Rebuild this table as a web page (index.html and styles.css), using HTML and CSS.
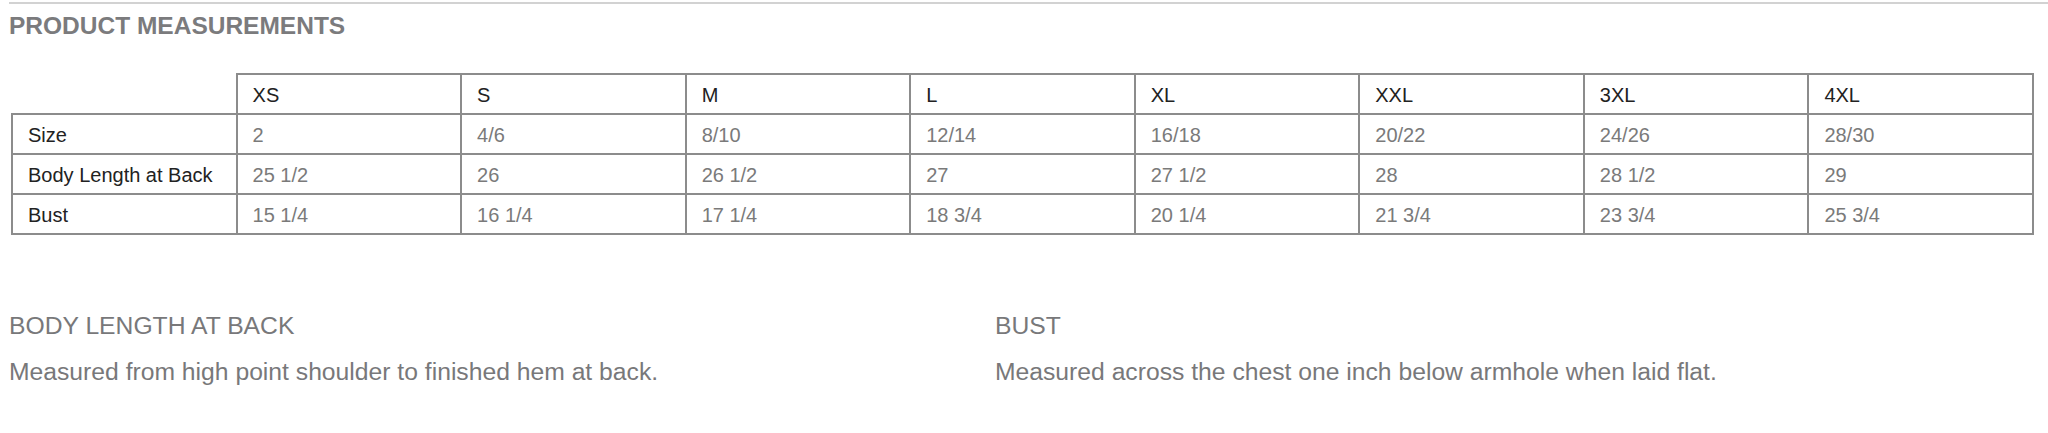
FILE: index.html
```html
<!DOCTYPE html>
<html lang="en">
<head>
<meta charset="utf-8">
<title>Product Measurements</title>
<link rel="stylesheet" href="styles.css">
</head>
<body>
<div class="page">
  <div class="rule"></div>
  <h2 class="title">PRODUCT MEASUREMENTS</h2>
  <table class="measure">
    <thead>
      <tr>
        <th class="corner"></th>
        <th>XS</th><th>S</th><th>M</th><th>L</th><th>XL</th><th>XXL</th><th>3XL</th><th>4XL</th>
      </tr>
    </thead>
    <tbody>
      <tr>
        <th class="label">Size</th>
        <td>2</td><td>4/6</td><td>8/10</td><td>12/14</td><td>16/18</td><td>20/22</td><td>24/26</td><td>28/30</td>
      </tr>
      <tr>
        <th class="label">Body Length at Back</th>
        <td>25 1/2</td><td>26</td><td>26 1/2</td><td>27</td><td>27 1/2</td><td>28</td><td>28 1/2</td><td>29</td>
      </tr>
      <tr>
        <th class="label">Bust</th>
        <td>15 1/4</td><td>16 1/4</td><td>17 1/4</td><td>18 3/4</td><td>20 1/4</td><td>21 3/4</td><td>23 3/4</td><td>25 3/4</td>
      </tr>
    </tbody>
  </table>
  <div class="notes">
    <div class="note">
      <h3 class="note-title">BODY LENGTH AT BACK</h3>
      <p class="note-text">Measured from high point shoulder to finished hem at back.</p>
    </div>
    <div class="note">
      <h3 class="note-title">BUST</h3>
      <p class="note-text">Measured across the chest one inch below armhole when laid flat.</p>
    </div>
  </div>
</div>
</body>
</html>
```

FILE: styles.css
```css
html, body {
  margin: 0;
  padding: 0;
  background: #ffffff;
}

body {
  font-family: "Liberation Sans", Arial, Helvetica, sans-serif;
  color: #333333;
}

.page {
  padding: 2px 0 0 9px;
}

.rule {
  height: 2px;
  background: #d2d2d2;
}

.title {
  margin: 8px 0 0 0;
  font-size: 24.5px;
  line-height: 28px;
  font-weight: bold;
  color: #7b7b7d;
}

.measure {
  margin: 33px 14px 0 2px;
  width: calc(100% - 16px);
  border-collapse: collapse;
  table-layout: fixed;
}

.measure th,
.measure td {
  border: 2px solid #8c8c8c;
  height: 40px;
  padding: 2px 15px 0 15px;
  text-align: left;
  font-size: 20px;
  font-weight: normal;
  vertical-align: middle;
  box-sizing: border-box;
}

.measure thead th {
  color: #222222;
}

.measure .corner {
  border-top: none;
  border-left: none;
}

.measure .label {
  color: #222222;
}

.measure td {
  color: #7a7a7a;
}

.notes {
  display: grid;
  grid-template-columns: 986px 1fr;
  margin-top: 77px;
}

.note-title {
  margin: 0;
  font-size: 24.7px;
  line-height: 28px;
  font-weight: normal;
  color: #78787a;
}

.note-text {
  margin: 18px 0 0 0;
  font-size: 24.7px;
  line-height: 28px;
  color: #78787a;
}
```
